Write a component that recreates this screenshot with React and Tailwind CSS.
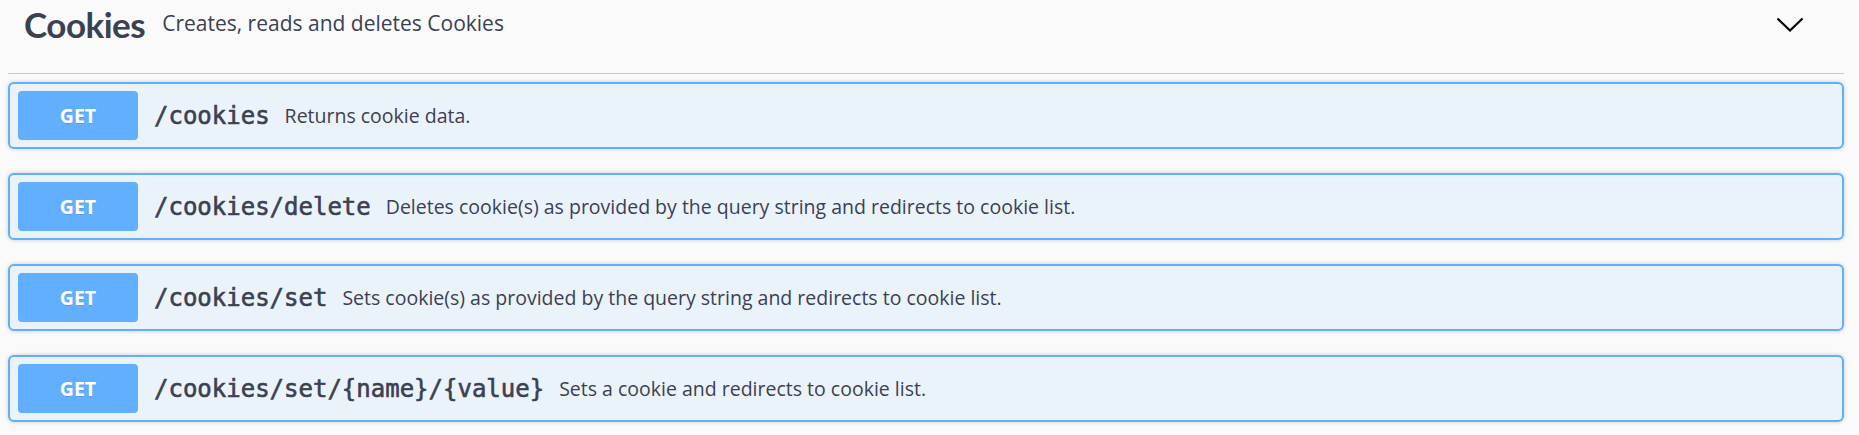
import React from "react";

const ops = [
  { path: "/cookies", desc: "Returns cookie data." },
  { path: "/cookies/delete", desc: "Deletes cookie(s) as provided by the query string and redirects to cookie list." },
  { path: "/cookies/set", desc: "Sets cookie(s) as provided by the query string and redirects to cookie list." },
  { path: "/cookies/set/{name}/{value}", desc: "Sets a cookie and redirects to cookie list." },
];

function Op({ path, desc }) {
  return (
    <div className="flex h-[67px] items-center rounded-[6px] border-2 border-[#61affe] bg-[#ebf3fa] px-[8px] shadow-[0_0_4px_rgba(0,0,0,0.19)]">
      <div className="flex h-[49px] w-[120px] shrink-0 items-center justify-center rounded-[4px] bg-[#61affe] text-[19.5px] font-bold text-white [font-family:'Open_Sans',sans-serif] [text-shadow:0_1px_0_rgba(0,0,0,0.1)]">
        GET
      </div>
      <span className="ml-[16px] text-[24px] font-normal text-[#3b4151] [font-family:'DejaVu_Sans_Mono',monospace] [-webkit-text-stroke:0.6px_#3b4151]">
        {path}
      </span>
      <span className="ml-[15px] text-[19.5px] text-[#3b4151] [font-family:'Open_Sans',sans-serif]">
        {desc}
      </span>
    </div>
  );
}

export default function App() {
  return (
    <div className="min-h-[435px] w-full bg-[#fafafa] pl-[8px] pr-[15px]">
      <div className="h-[74px] border-b border-[#c9cacf]">
        <div className="flex h-[48px] items-center pl-[16px] pr-[40px]">
          <span className="text-[35px] font-bold tracking-[-0.5px] text-[#3b4151] [font-family:Lato,sans-serif]">
            Cookies
          </span>
          <span className="ml-[17px] text-[21px] text-[#3b4151] [font-family:'Open_Sans',sans-serif]">
            Creates, reads and deletes Cookies
          </span>
          <svg className="ml-auto" width="28" height="15" viewBox="0 0 28 15" fill="none">
            <path d="M1.5 1.5 L14 13.5 L26.5 1.5" stroke="#000" strokeWidth="2.2" />
          </svg>
        </div>
      </div>
      <div className="flex flex-col gap-[24px] pt-[8px]">
        {ops.map((o) => (
          <Op key={o.path} {...o} />
        ))}
      </div>
    </div>
  );
}
